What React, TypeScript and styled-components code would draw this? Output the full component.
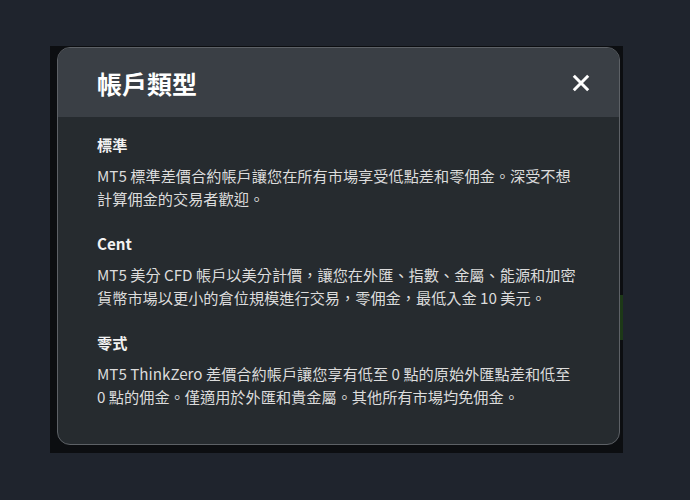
import React from 'react';
import styled, { createGlobalStyle } from 'styled-components';

const GlobalStyle = createGlobalStyle`
  html, body {
    margin: 0;
    padding: 0;
    background: #1f242d;
  }
  body {
    font-family: "Noto Sans CJK TC", "Noto Sans", sans-serif;
    -webkit-font-smoothing: antialiased;
  }
  * {
    box-sizing: border-box;
  }
`;

interface Section {
  title: string;
  body: string;
}

const sections: Section[] = [
  {
    title: '標準',
    body: 'MT5 標準差價合約帳戶讓您在所有市場享受低點差和零佣金。深受不想計算佣金的交易者歡迎。',
  },
  {
    title: 'Cent',
    body: 'MT5 美分 CFD 帳戶以美分計價，讓您在外匯、指數、金屬、能源和加密貨幣市場以更小的倉位規模進行交易，零佣金，最低入金 10 美元。',
  },
  {
    title: '零式',
    body: 'MT5 ThinkZero 差價合約帳戶讓您享有低至 0 點的原始外匯點差和低至 0 點的佣金。僅適用於外匯和貴金屬。其他所有市場均免佣金。',
  },
];

const Page = styled.div`
  width: 690px;
  height: 500px;
  padding: 46px 0 0 50px;
  background: #1f242d;
  overflow: hidden;
`;

const Backdrop = styled.div`
  position: relative;
  width: 573px;
  height: 407px;
  padding: 1px 3px 0 7px;
  background: #0c0e11;
`;

// a bit of the page underneath that shows at the right edge
const PeekStrip = styled.div<{ top: number; height: number; color: string }>`
  position: absolute;
  right: 0;
  top: ${p => p.top}px;
  width: 3px;
  height: ${p => p.height}px;
  background: ${p => p.color};
`;

const Modal = styled.div`
  width: 563px;
  height: 398px;
  border: 1px solid #5d6166;
  border-radius: 13px;
  background: #262b2f;
  overflow: hidden;
  display: flex;
  flex-direction: column;
`;

const Header = styled.div`
  height: 69px;
  flex: none;
  display: flex;
  align-items: center;
  justify-content: space-between;
  padding: 0 29px 0 39px;
  background: #3a3f45;
`;

const Title = styled.h2`
  margin: 0;
  font-size: 25px;
  line-height: 30px;
  font-weight: 700;
  color: #ffffff;
`;

const CloseButton = styled.button`
  width: 18px;
  height: 18px;
  padding: 0;
  border: 0;
  background: none;
  display: flex;
  cursor: pointer;
`;

const Body = styled.div`
  display: flex;
  flex-direction: column;
  gap: 22px;
  padding: 15px 38px 37px 39px;
`;

const Block = styled.div`
  display: flex;
  flex-direction: column;
  gap: 8px;
`;

const BlockTitle = styled.h3`
  margin: 0;
  font-size: 15.2px;
  line-height: 24px;
  font-weight: 700;
  color: #f2f2f2;
`;

const BlockText = styled.p`
  margin: 0;
  font-size: 15.2px;
  line-height: 22.5px;
  color: #dcdcdc;
`;

const CloseIcon = () => (
  <svg width="18" height="18" viewBox="0 0 18 18">
    <path d="M1.8 1.8 16.2 16.2 M16.2 1.8 1.8 16.2" stroke="#ffffff" strokeWidth="3" />
  </svg>
);

export default function App() {
  return (
    <>
      <GlobalStyle />
      <Page>
        <Backdrop>
          <PeekStrip top={249} height={45} color="#1d3917" />
          <Modal>
            <Header>
              <Title>帳戶類型</Title>
              <CloseButton aria-label="close">
                <CloseIcon />
              </CloseButton>
            </Header>
            <Body>
              {sections.map(s => (
                <Block key={s.title}>
                  <BlockTitle>{s.title}</BlockTitle>
                  <BlockText>{s.body}</BlockText>
                </Block>
              ))}
            </Body>
          </Modal>
        </Backdrop>
      </Page>
    </>
  );
}
